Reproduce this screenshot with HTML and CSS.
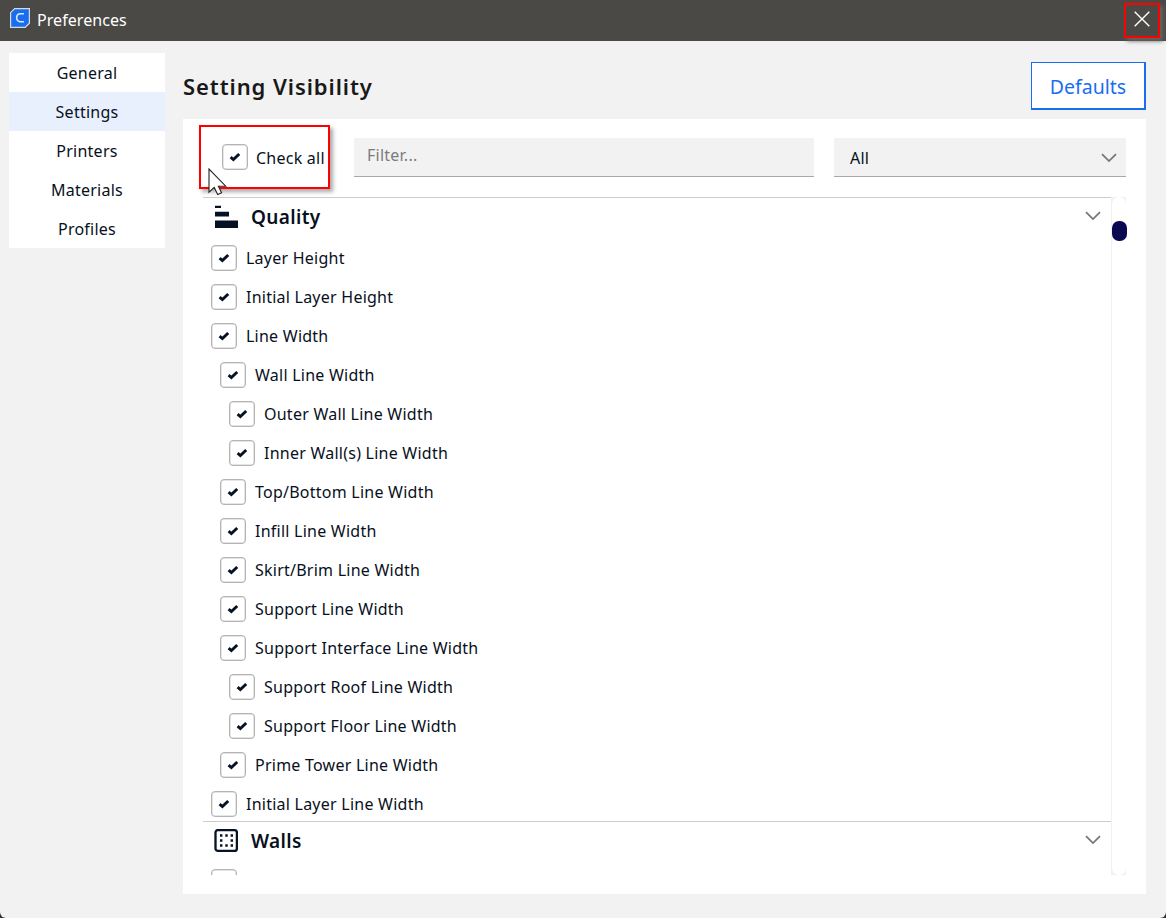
FILE: index.html
```
<!DOCTYPE html>
<html lang="en">
<head>
<meta charset="utf-8">
<title>Preferences</title>
<link rel="stylesheet" href="styles.css">
</head>
<body>
<svg class="defs" width="0" height="0" aria-hidden="true">
  <symbol id="tick" viewBox="0 0 12 10"><path d="M1.6 5.1 4.4 7.6 10.2 2" fill="none" stroke="#061224" stroke-width="2.9"/></symbol>
  <symbol id="chevron" viewBox="0 0 16 10"><path d="M1 1.2 8 8.1 15 1.2" fill="none" stroke="#777" stroke-width="1.8"/></symbol>
</svg>
<div class="window">
  <header class="titlebar">
    <svg class="logo" width="20" height="20" viewBox="0 0 20 20"><path d="M4.7.6H19.4V15.2L15.2 19.4H.6V4.7Z" fill="#196ef0" stroke="#d6dae0" stroke-width="1.2"/><path d="M14 5.7H9.8A4.1 4.1 0 0 0 9.8 13.7H14" fill="none" stroke="#d9e6fb" stroke-width="1.5"/></svg>
    <span class="window-title">Preferences</span>
    <button class="close" aria-label="Close"><svg width="16" height="16" viewBox="0 0 16 16"><path d="M.7.7 15.3 15.3M15.3.7.7 15.3" stroke="#fff" stroke-width="1.4"/></svg></button>
  </header>
  <div class="body">
    <nav class="sidebar">
      <a class="tab">General</a>
      <a class="tab active">Settings</a>
      <a class="tab">Printers</a>
      <a class="tab">Materials</a>
      <a class="tab">Profiles</a>
    </nav>
    <main class="main">
      <div class="heading"><h1>Setting Visibility</h1><button class="defaults">Defaults</button></div>
      <section class="card">
        <div class="toolbar">
          <div class="check-all">
            <span class="box"><svg><use href="#tick"/></svg></span><span class="check-label">Check all</span>
            <svg class="cursor" width="19" height="28" viewBox="0 0 19 28"><path d="M1 1V24.2L6.2 19.4 9.7 26.6 13.6 24.8 10.4 18.2H17.8Z" fill="#fff" stroke="#222" stroke-width="1.1"/></svg>
          </div>
          <div class="filter">Filter...</div>
          <div class="select"><span>All</span><svg class="chevron"><use href="#chevron"/></svg></div>
        </div>
        <div class="scroll">
          <div class="list">
            <div class="category"><svg width="24" height="24" viewBox="0 0 24 24"><path d="M1 .7H7V3H1ZM1 6.7H15V11.5H1ZM1 15.5H24V23H1Z" fill="#061224"/></svg><h2>Quality</h2><svg class="chevron"><use href="#chevron"/></svg></div>
            <div class="row"><span class="box"><svg><use href="#tick"/></svg></span><span>Layer Height</span></div>
            <div class="row"><span class="box"><svg><use href="#tick"/></svg></span><span>Initial Layer Height</span></div>
            <div class="row"><span class="box"><svg><use href="#tick"/></svg></span><span>Line Width</span></div>
            <div class="row child"><span class="box"><svg><use href="#tick"/></svg></span><span>Wall Line Width</span></div>
            <div class="row grandchild"><span class="box"><svg><use href="#tick"/></svg></span><span>Outer Wall Line Width</span></div>
            <div class="row grandchild"><span class="box"><svg><use href="#tick"/></svg></span><span>Inner Wall(s) Line Width</span></div>
            <div class="row child"><span class="box"><svg><use href="#tick"/></svg></span><span>Top/Bottom Line Width</span></div>
            <div class="row child"><span class="box"><svg><use href="#tick"/></svg></span><span>Infill Line Width</span></div>
            <div class="row child"><span class="box"><svg><use href="#tick"/></svg></span><span>Skirt/Brim Line Width</span></div>
            <div class="row child"><span class="box"><svg><use href="#tick"/></svg></span><span>Support Line Width</span></div>
            <div class="row child"><span class="box"><svg><use href="#tick"/></svg></span><span>Support Interface Line Width</span></div>
            <div class="row grandchild"><span class="box"><svg><use href="#tick"/></svg></span><span>Support Roof Line Width</span></div>
            <div class="row grandchild"><span class="box"><svg><use href="#tick"/></svg></span><span>Support Floor Line Width</span></div>
            <div class="row child"><span class="box"><svg><use href="#tick"/></svg></span><span>Prime Tower Line Width</span></div>
            <div class="row"><span class="box"><svg><use href="#tick"/></svg></span><span>Initial Layer Line Width</span></div>
            <div class="category"><svg width="24" height="24" viewBox="0 0 24 24"><rect x="1.5" y="1.1" width="21.4" height="20.8" rx="2.5" fill="#fff" stroke="#061224" stroke-width="2.3"/><path d="M6 6.5H20M6 16.5H20" stroke="#061224" stroke-width="2.4" stroke-dasharray="2.4 2.9"/><path d="M6 11.5H8.4M16.6 11.5H19" stroke="#061224" stroke-width="2.4"/></svg><h2>Walls</h2><svg class="chevron"><use href="#chevron"/></svg></div>
            <div class="row"><span class="box"></span></div>
          </div>
          <div class="scrollbar"><div class="track"><div class="thumb"></div></div></div>
        </div>
      </section>
    </main>
  </div>
</div>
</body>
</html>
```
FILE: styles.css
```
* { box-sizing: border-box; }
html { background: #333; }
body { margin: 0; color: #08101c; font: 16px/22px "Noto Sans", sans-serif; letter-spacing: .24px; }
svg { display: block; flex: none; }
.defs { position: absolute; }
button { padding: 0; font: inherit; background: none; border: 0; }
.window { height: 918px; display: flex; flex-direction: column; overflow: hidden; background: #f2f2f2; border-radius: 0 0 6px 6px; }
.titlebar { height: 41px; flex: none; display: flex; align-items: flex-start; background: #4b4946; color: #fff; padding: 3px 6px 0 10px; }
.logo { margin-top: 5px; }
.window-title { margin: 6px auto 0 7px; letter-spacing: .06px; }
.close { width: 36px; height: 35px; display: grid; place-items: center; padding-bottom: 4px; border: 2px solid #f00; box-shadow: 3px 3px 4px #66635f; }
.body { flex: 1; display: flex; gap: 18px; padding: 12px 20px 24px 9px; }
.sidebar { width: 156px; height: 195px; background: #fff; }
.tab { display: block; height: 39px; padding-top: 9px; text-align: center; }
.active { background: #e8f0fe; }
.main { flex: 1; display: flex; flex-direction: column; }
.heading { height: 66px; display: flex; justify-content: space-between; padding-top: 9px; }
h1 { margin: 8px 0 0; font-size: 22px; line-height: 32px; font-weight: 600; color: #191919; letter-spacing: .92px; }
.defaults { width: 115px; height: 48px; padding-top: 2px; border: 1px solid #196ef0; border-right-width: 2px; border-bottom-width: 2px; background: #fff; color: #196ef0; font-size: 19.5px; letter-spacing: 0; }
.card { flex: 1; background: #fff; padding: 6px 20px 19px 16px; display: flex; flex-direction: column; }
.toolbar { height: 72px; display: flex; align-items: flex-start; }
.check-all { position: relative; width: 131px; height: 64px; margin-right: 24px; display: flex; align-items: center; gap: 8px; padding-left: 21px; border: 2px solid #f00; box-shadow: 3px 3px 4px #aaa; white-space: nowrap; }
.check-label { padding-top: 2px; }
.cursor { position: absolute; left: 7px; top: 41px; }
.filter, .select { height: 39px; margin-top: 13px; background: #f2f2f2; border-bottom: 1px solid #aaa; }
.filter { width: 460px; margin-right: 20px; padding: 6px 13px; color: #7c7c7c; }
.select { width: 292px; display: flex; align-items: center; justify-content: space-between; padding: 2px 9px 0 16px; }
.chevron { width: 16px; height: 10px; }
.box { width: 26px; height: 26px; flex: none; display: grid; place-items: center; border: 1.5px solid #b4b4b4; border-radius: 4px; background: #fff; box-shadow: inset 0 0 0 .5px #ccc; }
.box svg { width: 12px; height: 10px; }
.scroll { height: 678px; margin-left: 4px; margin-right: -1px; display: flex; overflow: hidden; }
.list { width: 908px; overflow: hidden; }
.category { height: 39px; display: flex; align-items: center; padding: 0 10px 0 11px; border-top: 1px solid #ccc; }
.category .chevron { margin: 0 0 2px auto; }
h2 { margin: 0 0 0 13px; font-size: 19px; line-height: 26px; font-weight: 600; letter-spacing: .35px; }
.row { height: 39px; display: flex; align-items: center; gap: 9px; padding: 5px 0 0 8px; white-space: nowrap; }
.child { padding-left: 17px; }
.grandchild { padding-left: 26px; }
.scrollbar { width: 15px; background: #f1f1f1; padding-left: 1px; }
.track { height: 100%; background: #fff; border-radius: 8px; padding-top: 24px; }
.thumb { width: 15px; height: 20px; border-radius: 7px; background: #0a0850; }
```
